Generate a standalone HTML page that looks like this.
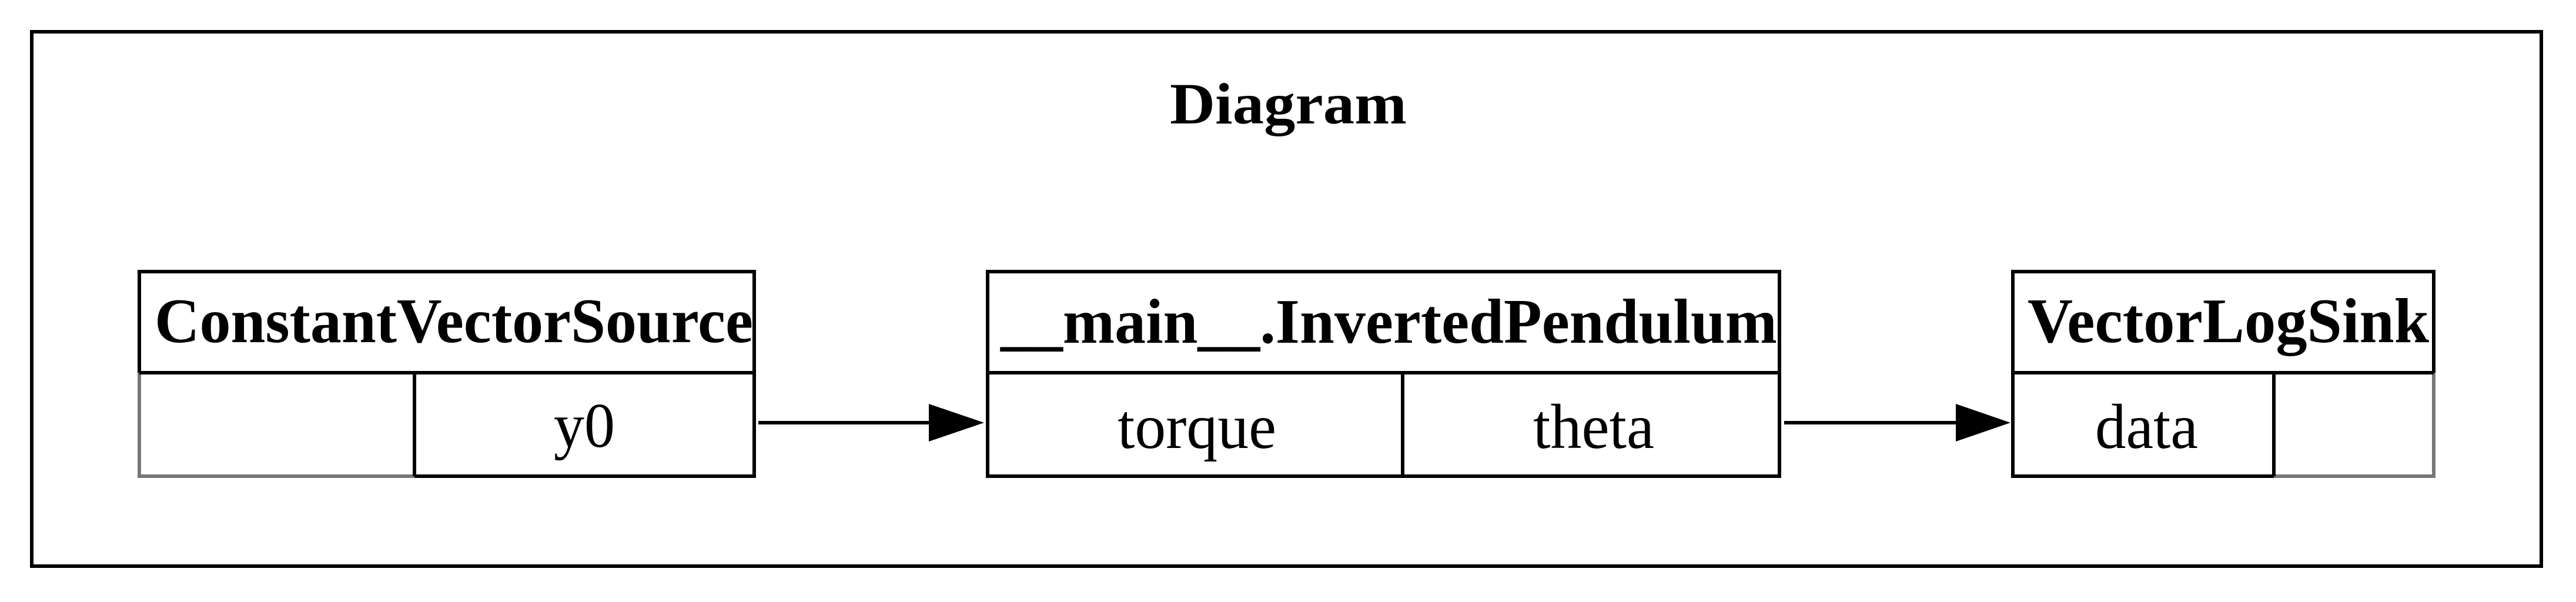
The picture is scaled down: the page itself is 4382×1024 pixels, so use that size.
<!DOCTYPE html>
<html><head><meta charset="utf-8"><style>html,body{margin:0;padding:0;background:#fff;}svg{display:block}</style></head>
<body>
<svg width="4382" height="1024" viewBox="0 0 4382 1024" xmlns="http://www.w3.org/2000/svg" font-family="'Liberation Serif', serif">
<rect x="0" y="0" width="4382" height="1024" fill="#fff"/>
<rect x="54" y="54" width="4269" height="909" fill="none" stroke="#000" stroke-width="6"/>
<text x="1990" y="210" font-size="100" font-weight="bold" textLength="403" lengthAdjust="spacingAndGlyphs">Diagram</text>

<!-- ConstantVectorSource -->
<g stroke-width="6" fill="none">
<polyline points="237,634 237,462 1283,462 1283,810 705,810" stroke="#000"/>
<polyline points="237,634 237,810 705,810" stroke="#777"/>
<line x1="237" y1="634" x2="1283" y2="634" stroke="#000"/>
<line x1="705" y1="634" x2="705" y2="810" stroke="#000"/>
</g>
<text x="263" y="582" font-size="108" font-weight="bold" textLength="1018" lengthAdjust="spacingAndGlyphs">ConstantVectorSource</text>
<text x="942" y="760" font-size="108" textLength="104" lengthAdjust="spacingAndGlyphs">y0</text>

<!-- InvertedPendulum -->
<g stroke-width="6" fill="none" stroke="#000">
<rect x="1680" y="462" width="1347" height="348"/>
<line x1="1680" y1="634" x2="3027" y2="634"/>
<line x1="2386" y1="634" x2="2386" y2="810"/>
</g>
<text x="1702" y="583" font-size="108" font-weight="bold" textLength="1321" lengthAdjust="spacingAndGlyphs">__main__.InvertedPendulum</text>
<text x="1901" y="762" font-size="108" textLength="270" lengthAdjust="spacingAndGlyphs">torque</text>
<text x="2608" y="762" font-size="108" textLength="206" lengthAdjust="spacingAndGlyphs">theta</text>

<!-- VectorLogSink -->
<g stroke-width="6" fill="none">
<polyline points="4140,634 4140,462 3424,462 3424,810 3868,810" stroke="#000"/>
<polyline points="4140,634 4140,810 3868,810" stroke="#777"/>
<line x1="3424" y1="634" x2="4140" y2="634" stroke="#000"/>
<line x1="3868" y1="634" x2="3868" y2="810" stroke="#000"/>
</g>
<text x="3449" y="582" font-size="108" font-weight="bold" textLength="683" lengthAdjust="spacingAndGlyphs">VectorLogSink</text>
<text x="3564" y="762" font-size="108" textLength="175" lengthAdjust="spacingAndGlyphs">data</text>

<!-- arrows -->
<line x1="1290" y1="719" x2="1590" y2="719" stroke="#000" stroke-width="6"/>
<polygon points="1580,687 1674,719 1580,751" fill="#000"/>
<line x1="3035" y1="719" x2="3335" y2="719" stroke="#000" stroke-width="6"/>
<polygon points="3327,687 3420,719 3327,751" fill="#000"/>
</svg>
</body></html>
